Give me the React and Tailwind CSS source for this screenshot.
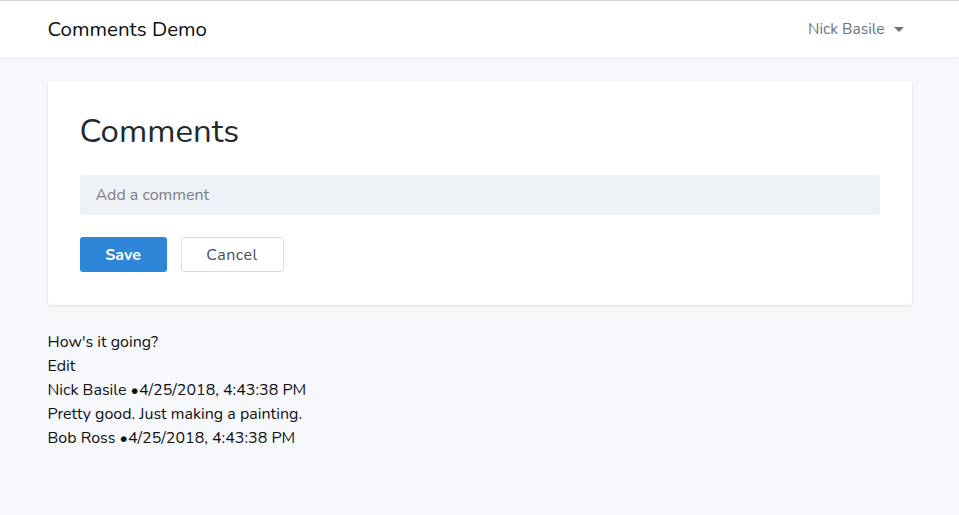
export default function App() {
  const font = { fontFamily: '"Nunito", "Open Sans", "Noto Sans", sans-serif' };
  return (
    <div className="min-h-[515px] bg-[#f7f8fc] text-[#22292f] border-t border-[#d4d4d4]" style={font}>
      <nav className="bg-white h-[56px] shadow-[0_1px_3px_rgba(0,0,0,0.06)]">
        <div className="w-[864px] mx-auto h-full flex items-center justify-between">
          <span className="text-[20.5px] text-[#111]">Comments Demo</span>
          <div className="flex items-center gap-[9px] pr-[8px] text-[15.5px] text-[#6c757d]">
            <span>Nick Basile</span>
            <svg width="10" height="5" viewBox="0 0 10 5"><path d="M0 0h10L5 5z" fill="#6c757d" /></svg>
          </div>
        </div>
      </nav>
      <main className="w-[864px] mx-auto pt-[24px]">
        <div className="bg-white rounded-[4px] shadow-[0_1px_3px_rgba(0,0,0,0.12)] px-[32px] pt-[28px] pb-[33px]">
          <h1 className="text-[33px] leading-[46px] text-[#22292f]">Comments</h1>
          <div className="mt-[20px] h-[40px] rounded-[4px] bg-[#eef1f5] flex items-center px-[16px] text-[16px] text-[#7a7f85]">
            Add a comment
          </div>
          <div className="mt-[22px] flex gap-[14px]">
            <button className="w-[87px] h-[35px] rounded-[3px] bg-[#2d86d8] text-white font-bold text-[16px]">Save</button>
            <button className="w-[103px] h-[35px] rounded-[3px] bg-white border border-[#dadde2] text-[#444c55] text-[16px] tracking-[0.5px]">Cancel</button>
          </div>
        </div>
        <div className="mt-[25px] text-[16px] leading-[24px] text-[#111]">
          <div>How's it going?</div>
          <div>Edit</div>
          <div>Nick Basile •4/25/2018, 4:43:38 PM</div>
          <div>Pretty good. Just making a painting.</div>
          <div>Bob Ross •4/25/2018, 4:43:38 PM</div>
        </div>
      </main>
    </div>
  );
}
